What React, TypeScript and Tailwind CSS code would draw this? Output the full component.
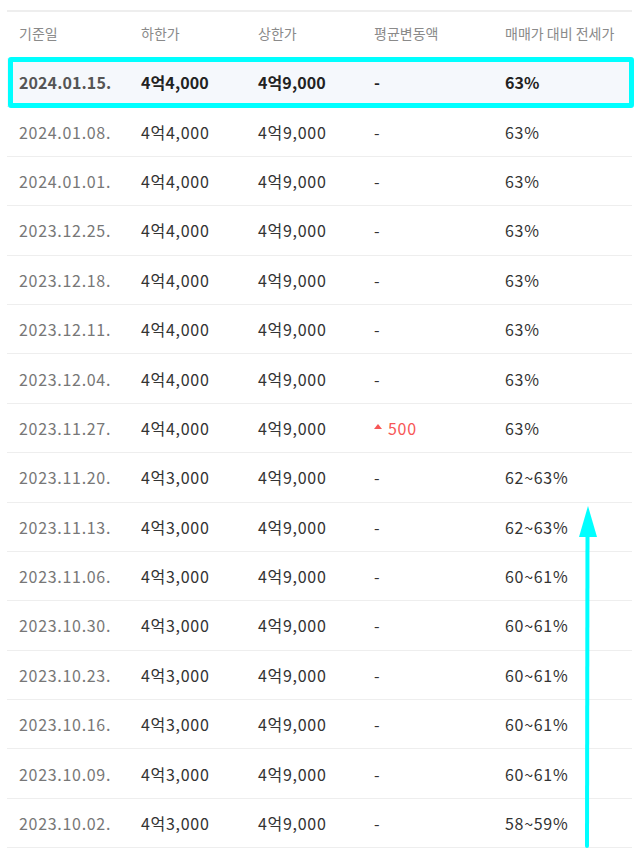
const rows = [
  { date: "2024.01.15.", low: "4억4,000", high: "4억9,000", diff: "-", ratio: "63%" },
  { date: "2024.01.08.", low: "4억4,000", high: "4억9,000", diff: "-", ratio: "63%" },
  { date: "2024.01.01.", low: "4억4,000", high: "4억9,000", diff: "-", ratio: "63%" },
  { date: "2023.12.25.", low: "4억4,000", high: "4억9,000", diff: "-", ratio: "63%" },
  { date: "2023.12.18.", low: "4억4,000", high: "4억9,000", diff: "-", ratio: "63%" },
  { date: "2023.12.11.", low: "4억4,000", high: "4억9,000", diff: "-", ratio: "63%" },
  { date: "2023.12.04.", low: "4억4,000", high: "4억9,000", diff: "-", ratio: "63%" },
  { date: "2023.11.27.", low: "4억4,000", high: "4억9,000", diff: "500", ratio: "63%" },
  { date: "2023.11.20.", low: "4억3,000", high: "4억9,000", diff: "-", ratio: "62~63%" },
  { date: "2023.11.13.", low: "4억3,000", high: "4억9,000", diff: "-", ratio: "62~63%" },
  { date: "2023.11.06.", low: "4억3,000", high: "4억9,000", diff: "-", ratio: "60~61%" },
  { date: "2023.10.30.", low: "4억3,000", high: "4억9,000", diff: "-", ratio: "60~61%" },
  { date: "2023.10.23.", low: "4억3,000", high: "4억9,000", diff: "-", ratio: "60~61%" },
  { date: "2023.10.16.", low: "4억3,000", high: "4억9,000", diff: "-", ratio: "60~61%" },
  { date: "2023.10.09.", low: "4억3,000", high: "4억9,000", diff: "-", ratio: "60~61%" },
  { date: "2023.10.02.", low: "4억3,000", high: "4억9,000", diff: "-", ratio: "58~59%" },
];

const cols = "grid grid-cols-[122px_117px_116px_131px_139px]";

function Diff({ value }: { value: string }) {
  if (value === "-") return <span>-</span>;
  return (
    <span className="flex items-center gap-[6px] text-[#f75656]">
      <svg width="8" height="5" viewBox="0 0 8 5" className="mt-[-2px]">
        <path d="M4 0L8 5H0Z" fill="#f75656" />
      </svg>
      {value}
    </span>
  );
}

export default function App() {
  return (
    <div
      className="relative h-[856px] w-[640px] overflow-hidden bg-white"
      style={{ fontFamily: '"Noto Sans CJK KR", "Noto Sans", sans-serif' }}
    >
      <div className="ml-[7px] mt-[10px] w-[625px] border-t-2 border-[#eeeeee]">
        <div className={`${cols} h-[46px] items-center pb-[3px] text-[14px] text-[#8a8a8a]`}>
          <div className="pl-3">기준일</div>
          <div className="pl-3">하한가</div>
          <div className="pl-3">상한가</div>
          <div className="pl-3">평균변동액</div>
          <div className="pl-3">매매가 대비 전세가</div>
        </div>
        {rows.map((r, i) => {
          const first = i === 0;
          return (
            <div
              key={r.date}
              className={`${cols} h-[49.4px] items-center border-b border-[#eeeeee] text-[16px] ${
                first
                  ? "bg-[#f5f8fc] font-bold tracking-[0.1px] text-[#222]"
                  : "tracking-[0.7px] text-[#333]"
              }`}
            >
              <div className={`pl-3 ${first ? "text-[#555]" : "text-[#777]"}`}>{r.date}</div>
              <div className="pl-3">{r.low}</div>
              <div className="pl-3">{r.high}</div>
              <div className="pl-3">
                <Diff value={r.diff} />
              </div>
              <div className="pl-3">{r.ratio}</div>
            </div>
          );
        })}
      </div>

      {/* annotation: highlight box */}
      <div className="pointer-events-none absolute left-[8px] top-[57px] h-[51px] w-[626px] rounded-[3px] border-[5px] border-[#00ffff]" />

      {/* annotation: arrow */}
      <svg
        className="pointer-events-none absolute left-[576px] top-[500px]"
        width="24"
        height="352"
        viewBox="0 0 24 352"
      >
        <path d="M11.5 30 L11 346" stroke="#00ffff" strokeWidth="4" strokeLinecap="round" fill="none" />
        <path d="M12 6 L21 37 L3 37 Z" fill="#00ffff" />
      </svg>
    </div>
  );
}
